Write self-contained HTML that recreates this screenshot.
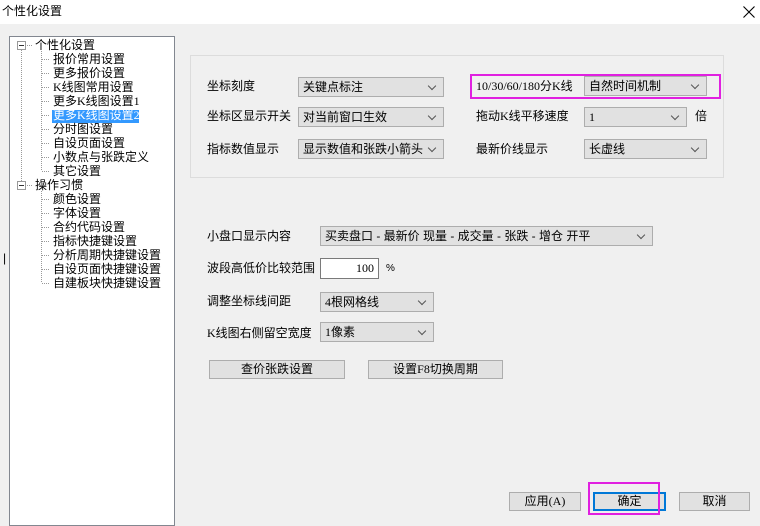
<!DOCTYPE html>
<html><head><meta charset="utf-8"><style>
*{margin:0;padding:0;box-sizing:border-box}
body{width:760px;height:519px;background:#f0f0f0;font-family:"Liberation Sans","Noto Sans CJK SC",sans-serif;font-size:12px;color:#000;position:relative;overflow:hidden}
.a{position:absolute;white-space:nowrap;line-height:14px}
.sel{position:absolute;background:#e1e1e1;border:1px solid #adadad;height:20px;padding-left:4px;line-height:18px;white-space:nowrap}
.sel:after{content:"";position:absolute;right:8px;top:5px;width:5px;height:5px;border-right:1px solid #555;border-bottom:1px solid #555;transform:rotate(45deg)}
.btn{position:absolute;background:#e1e1e1;border:1px solid #adadad;text-align:center;line-height:17px;height:19px}
.tree{position:absolute;left:9px;top:36px;width:166px;height:490px;background:#fff;border:1px solid #828790}
.ti{position:absolute;line-height:13px;white-space:nowrap}
.s{font-family:"Liberation Serif","Noto Sans CJK SC",serif}
</style></head><body>
<div style="position:absolute;left:0;top:0;width:760px;height:24px;background:#fff"></div>
<div class="a" style="left:2px;top:4px">个性化设置</div>
<svg width="12" height="12" style="position:absolute;left:743px;top:6px"><path d="M0.5 0.5L11.5 11.5M11.5 0.5L0.5 11.5" stroke="#000" stroke-width="1.1"/></svg>
<div class="a" style="left:376px;top:-8px">ˇ</div>
<div class="a" style="left:3px;top:251px">|</div>
<div class="tree">
<svg width="166" height="300" style="position:absolute;left:0;top:0">
<g stroke="#999" stroke-dasharray="1,1" fill="none">
<line x1="11.5" y1="13" x2="11.5" y2="146"/>
<line x1="15" y1="8.5" x2="22" y2="8.5"/>
<line x1="15" y1="148.5" x2="22" y2="148.5"/>
<line x1="31.5" y1="14" x2="31.5" y2="134"/>
<line x1="31.5" y1="154" x2="31.5" y2="246"/>
</g>
<g stroke="#999" stroke-dasharray="1,1">
<line x1="32" y1="22.5" x2="40" y2="22.5"/><line x1="32" y1="36.5" x2="40" y2="36.5"/><line x1="32" y1="50.5" x2="40" y2="50.5"/><line x1="32" y1="64.5" x2="40" y2="64.5"/><line x1="32" y1="78.5" x2="40" y2="78.5"/><line x1="32" y1="92.5" x2="40" y2="92.5"/><line x1="32" y1="106.5" x2="40" y2="106.5"/><line x1="32" y1="120.5" x2="40" y2="120.5"/><line x1="32" y1="134.5" x2="40" y2="134.5"/>
<line x1="32" y1="162.5" x2="40" y2="162.5"/><line x1="32" y1="176.5" x2="40" y2="176.5"/><line x1="32" y1="190.5" x2="40" y2="190.5"/><line x1="32" y1="204.5" x2="40" y2="204.5"/><line x1="32" y1="218.5" x2="40" y2="218.5"/><line x1="32" y1="232.5" x2="40" y2="232.5"/><line x1="32" y1="246.5" x2="40" y2="246.5"/>
</g>
<rect x="7.5" y="4.5" width="8" height="8" fill="#fff" stroke="#999"/><line x1="9" y1="8.5" x2="14" y2="8.5" stroke="#333"/>
<rect x="7.5" y="144.5" width="8" height="8" fill="#fff" stroke="#999"/><line x1="9" y1="148.5" x2="14" y2="148.5" stroke="#333"/>
<rect x="42" y="73" width="87" height="13" fill="#3399ff"/>
</svg>
<div class="ti" style="left:25px;top:2px">个性化设置</div>
<div class="ti" style="left:43px;top:16px">报价常用设置</div>
<div class="ti" style="left:43px;top:30px">更多报价设置</div>
<div class="ti s" style="left:43px;top:44px">K线图常用设置</div>
<div class="ti s" style="left:43px;top:58px">更多K线图设置1</div>
<div class="ti s" style="left:43px;top:72px;color:#fff">更多K线图设置2</div>
<div class="ti" style="left:43px;top:86px">分时图设置</div>
<div class="ti" style="left:43px;top:100px">自设页面设置</div>
<div class="ti" style="left:43px;top:114px">小数点与张跌定义</div>
<div class="ti" style="left:43px;top:128px">其它设置</div>
<div class="ti" style="left:25px;top:142px">操作习惯</div>
<div class="ti" style="left:43px;top:156px">颜色设置</div>
<div class="ti" style="left:43px;top:170px">字体设置</div>
<div class="ti" style="left:43px;top:184px">合约代码设置</div>
<div class="ti" style="left:43px;top:198px">指标快捷键设置</div>
<div class="ti" style="left:43px;top:212px">分析周期快捷键设置</div>
<div class="ti" style="left:43px;top:226px">自设页面快捷键设置</div>
<div class="ti" style="left:43px;top:240px">自建板块快捷键设置</div>
</div>
<div style="position:absolute;left:190px;top:55px;width:534px;height:123px;border:1px solid #dcdcdc"></div>
<div style="position:absolute;left:470px;top:74px;width:251px;height:25px;border:2px solid #e020e0"></div>
<div class="a" style="left:207px;top:79px">坐标刻度</div>
<div class="sel" style="left:298px;top:77px;width:146px">关键点标注</div>
<div class="a s" style="left:476px;top:79px">10/30/60/180分K线</div>
<div class="sel" style="left:584px;top:76px;width:123px">自然时间机制</div>
<div class="a" style="left:207px;top:109px">坐标区显示开关</div>
<div class="sel" style="left:298px;top:107px;width:146px">对当前窗口生效</div>
<div class="a s" style="left:476px;top:109px">拖动K线平移速度</div>
<div class="sel s" style="left:584px;top:107px;width:103px">1</div>
<div class="a" style="left:695px;top:109px">倍</div>
<div class="a" style="left:207px;top:142px">指标数值显示</div>
<div class="sel" style="left:298px;top:139px;width:146px">显示数值和张跌小箭头</div>
<div class="a" style="left:476px;top:142px">最新价线显示</div>
<div class="sel" style="left:584px;top:139px;width:123px">长虚线</div>
<div class="a" style="left:207px;top:229px">小盘口显示内容</div>
<div class="sel" style="left:320px;top:226px;width:333px">买卖盘口 - 最新价 现量 - 成交量 - 张跌 - 增仓 开平</div>
<div class="a" style="left:207px;top:261px">波段高低价比较范围</div>
<div class="s" style="position:absolute;left:320px;top:258px;width:59px;height:21px;background:#fff;border:1px solid #7a7a7a;text-align:right;padding-right:4px;line-height:18px">100</div>
<div class="a" style="left:386px;top:262px;font-size:10px">%</div>
<div class="a" style="left:207px;top:294px">调整坐标线间距</div>
<div class="sel s" style="left:320px;top:292px;width:114px">4根网格线</div>
<div class="a s" style="left:207px;top:326px">K线图右侧留空宽度</div>
<div class="sel s" style="left:320px;top:322px;width:114px">1像素</div>
<div class="btn" style="left:209px;top:360px;width:136px">查价张跌设置</div>
<div class="btn s" style="left:368px;top:360px;width:135px">设置F8切换周期</div>
<div class="btn s" style="left:509px;top:492px;width:72px">应用(A)</div>
<div class="btn" style="left:593px;top:492px;width:73px;border:2px solid #0078d7;line-height:15px">确定</div>
<div style="position:absolute;left:588px;top:482px;width:72px;height:33px;border:2px solid #e020e0"></div>
<div class="btn" style="left:679px;top:492px;width:71px">取消</div>
</body></html>
